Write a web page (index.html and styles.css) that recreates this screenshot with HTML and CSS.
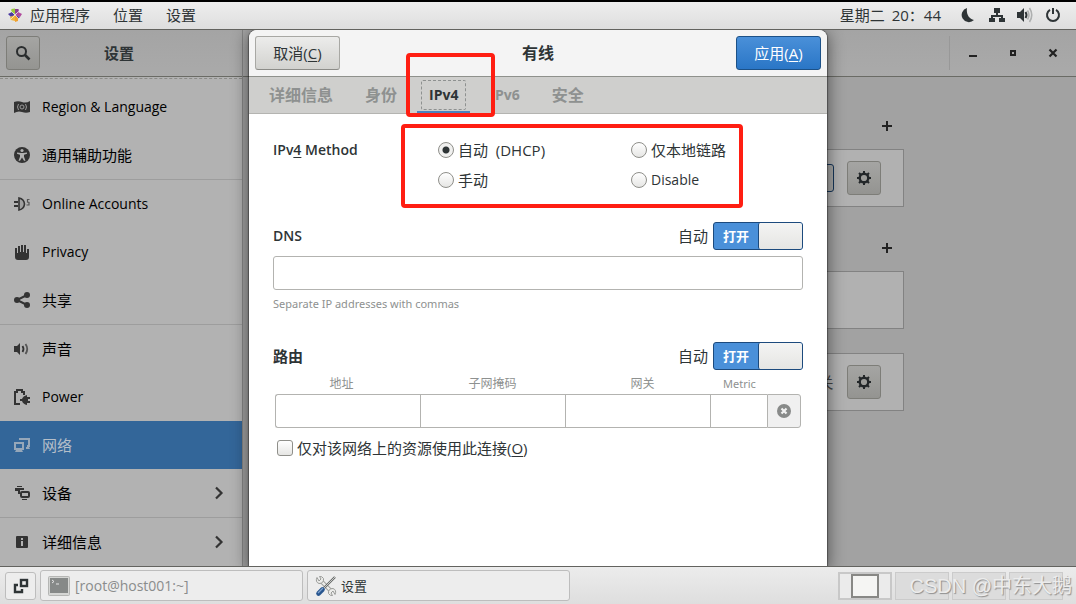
FILE: index.html
```html
<!DOCTYPE html>
<html lang="zh-CN">
<head>
<meta charset="utf-8">
<title>设置</title>
<link rel="stylesheet" href="styles.css">
</head>
<body>
<header class="topbar">
  <nav class="menus">
    <button class="menu"><svg class="distro" viewBox="0 0 14 14"><path fill="#9ccc3c" d="M3.500 1L7 .5V6L3 4z"/><path fill="#8d3f8f" d="M7 1l3.500 0L11 4 7 6z"/><path fill="#4a3aa0" d="M0 6l4-2 3 3-4 2z"/><path fill="#efb53a" d="M2 9l5-2v6l-4-1z"/><path fill="#b04a9c" d="M10 4l4 2-2 3-5-2z"/><path fill="#5a3a99" d="M7 7l5 2-2 2z"/><path fill="#f0a030" d="M7 7l3 3 0 3-3 1z"/><path stroke="#fff" d="M3 3l8 8M11 3L3 11" stroke-width=".6"/></svg>应用程序</button>
    <button class="menu">位置</button>
    <button class="menu">设置</button>
  </nav>
  <div class="status">
    <button class="clock">星期二<span>20：44</span></button>
    <svg class="icon" viewBox="0 0 16 16"><path fill="#2e3436" d="M6 1A7.200 7.200 0 1 0 13 13C8 12 5 7 6 1z"/></svg>
    <svg class="icon" viewBox="0 0 16 16"><path fill="#2e3436" d="M5 1h6v5H9v2h5v3h2v4h-6v-4h2v-1H4v1h2v4H0v-4h2V8h5V6H5z"/></svg>
    <svg class="icon" viewBox="0 0 16 16"><path fill="#2e3436" d="M0 5h3l4-4v14l-4-4H0z"/><path d="M8.500 5q2 3 0 6" fill="none" stroke="#2e3436" stroke-width="2"/><path d="M10.500 3.500q3 4.500 0 9M12.500 1q4.500 7 0 14" fill="none" stroke="#aeb0b0" stroke-width="1.600"/></svg>
    <svg class="icon" viewBox="0 0 16 16"><path fill="none" stroke="#2e3436" stroke-width="2" d="M5 2.800a6 6 0 1 0 6 0M8 1v6"/></svg>
  </div>
</header>

<main class="desktop">
  <section class="window">
    <aside class="sidebar">
      <header class="side-head">
        <button class="square" aria-label="搜索"><svg class="icon" viewBox="0 0 16 16"><circle cx="6.500" cy="6.500" r="4.500" fill="none" stroke="#2a2d2e" stroke-width="2"/><path d="M10 10l4.500 4.500" stroke="#2a2d2e" stroke-width="2.600"/></svg></button>
        <h1 class="side-title">设置</h1>
      </header>
      <nav class="side-list">
        <a class="item latin" href="#"><svg class="icon" viewBox="0 0 16 16"><path fill="#333" d="M0 3q4-1.500 8 0t8-1v11q-4 1.500-8 0t-8 1z"/><circle cx="8" cy="8" r="2" fill="none" stroke="#999"/><path d="M4.500 5q-2 3 0 6M11.500 5q2 3 0 6" fill="none" stroke="#999"/></svg>Region &amp; Language</a>
        <a class="item" href="#"><svg class="icon" viewBox="0 0 16 16"><circle cx="8" cy="8" r="8" fill="#333"/><circle cx="8" cy="3.500" r="1.600" fill="#b2b2b2"/><path fill="#b2b2b2" d="M3 5.500l4 .5h2l4-.5v1.300L10 7.800v2l1.500 4H10L8 10.500 6 13.800H4.500l1.500-4v-2L3 6.800z"/></svg>通用辅助功能</a>
        <a class="item latin ruled" href="#"><svg class="icon" viewBox="0 0 16 16"><path d="M0 6h4M0 10h4" stroke="#333" stroke-width="1.800"/><path d="M5 2q5 1 5.500 6Q10 13 5 14z" fill="#a0a0a0" stroke="#333" stroke-width="1.600"/><path d="M15.500 3.500h-2v2.500l1.500.5v2.500h-2.500" stroke="#555" fill="none" stroke-width="1.200"/></svg>Online Accounts</a>
        <a class="item latin" href="#"><svg class="icon" viewBox="0 0 16 16"><path fill="#333" d="M1 4h2v5h1V2h2v6h1V1h2v7h1V1h2v8h1V5h2v8q0 3-3 3H4q-3 0-3-3z"/></svg>Privacy</a>
        <a class="item" href="#"><svg class="icon" viewBox="0 0 16 16"><path d="M13 3L3 8l10 5" fill="none" stroke="#333" stroke-width="2"/><g fill="#333"><circle cx="13" cy="3" r="3"/><circle cx="3" cy="8" r="3"/><circle cx="13" cy="13" r="3"/></g></svg>共享</a>
        <a class="item ruled" href="#"><svg class="icon" viewBox="0 0 16 16"><path fill="#333" d="M0 5h3l3-3v12l-3-3H0z"/><path d="M8.500 5q2 3 0 6" fill="none" stroke="#333" stroke-width="1.800"/><path d="M11.500 3q3.500 5 0 10" fill="none" stroke="#555" stroke-width="1.800"/></svg>声音</a>
        <a class="item latin" href="#"><svg class="icon" viewBox="0 0 16 16"><path d="M6 15H1V3h2V1h5v2h2v3" fill="none" stroke="#333" stroke-width="2"/><path fill="#333" d="M6 10h2q1-3 5-4v2h3v2h-2v2h2v2h-3v2q-4-1-5-4H6z"/></svg>Power</a>
        <a class="item selected" href="#" aria-current="page"><svg class="icon" viewBox="0 0 16 16"><path d="M6 3V2h9v7h-2" fill="none" stroke="#96a7b9" stroke-width="2"/><rect x="1" y="6" width="8" height="6" fill="none" stroke="#96a7b9" stroke-width="2"/><path fill="#96a7b9" d="M2 13h6l1 2H1zM12 10h3l1 2h-4z"/></svg>网络</a>
        <a class="item" href="#"><svg class="icon" viewBox="0 0 16 16"><path fill="#333" d="M3 1h5v1H3zM1 3h9v2H6v4H4V6H1zM8 14h5v1H8z"/><rect x="7" y="7" width="8" height="5" rx="1" fill="none" stroke="#333" stroke-width="2"/></svg>设备<svg class="icon chevron" viewBox="0 0 16 16"><path d="M5 2.500L10.500 8 5 13.500" fill="none" stroke="#333" stroke-width="2.200"/></svg></a>
        <a class="item ruled" href="#"><svg class="icon" viewBox="0 0 16 16"><rect x="2" y="2" width="12" height="12" rx="1" fill="#333"/><path fill="#b2b2b2" d="M7 4h2v2H7zM7 7h2v5H7z"/></svg>详细信息<svg class="icon chevron" viewBox="0 0 16 16"><path d="M5 2.500L10.500 8 5 13.500" fill="none" stroke="#333" stroke-width="2.200"/></svg></a>
      </nav>
    </aside>

    <div class="content">
      <header class="content-head">
        <div class="window-buttons">
          <button class="plain" aria-label="最小化"><svg class="icon" viewBox="0 0 16 16"><path fill="#222" d="M4 10h8v2H4z"/></svg></button>
          <button class="plain" aria-label="最大化"><svg class="icon" viewBox="0 0 16 16"><rect x="6" y="6" width="4" height="4" fill="none" stroke="#222" stroke-width="2"/></svg></button>
          <button class="plain" aria-label="关闭"><svg class="icon" viewBox="0 0 16 16"><path d="M4.500 4.500l7 7M11.500 4.500l-7 7" stroke="#222" stroke-width="2.200"/></svg></button>
        </div>
      </header>
      <div class="panels">
        <div class="panel-head"><button class="plain" aria-label="添加"><svg class="icon" viewBox="0 0 16 16"><path fill="#222" d="M3 7h4V3h2v4h4v2H9v4H7V9H3z"/></svg></button></div>
        <div class="card"><span class="card-switch"></span><button class="square" aria-label="选项"><svg class="icon" viewBox="0 0 16 16"><circle cx="8" cy="8" r="4.300" fill="none" stroke="#232729" stroke-width="2.400"/><path d="M8 1v2M8 13v2M1 8h2M13 8h2M3 3l1.500 1.500M11.500 11.500L13 13M13 3l-1.500 1.500M4.500 11.500L3 13" stroke="#232729" stroke-width="2"/></svg></button></div>
        <div class="panel-head spaced"><button class="plain" aria-label="添加"><svg class="icon" viewBox="0 0 16 16"><path fill="#222" d="M3 7h4V3h2v4h4v2H9v4H7V9H3z"/></svg></button></div>
        <div class="card"></div>
        <div class="card detached"><span class="card-state">关</span><button class="square" aria-label="选项"><svg class="icon" viewBox="0 0 16 16"><circle cx="8" cy="8" r="4.300" fill="none" stroke="#232729" stroke-width="2.400"/><path d="M8 1v2M8 13v2M1 8h2M13 8h2M3 3l1.500 1.500M11.500 11.500L13 13M13 3l-1.500 1.500M4.500 11.500L3 13" stroke="#232729" stroke-width="2"/></svg></button></div>
      </div>
    </div>
  </section>

  <section class="dialog" role="dialog" aria-labelledby="dialog-title">
    <header class="dialog-head">
      <button class="button">取消(<u>C</u>)</button>
      <h2 class="dialog-title" id="dialog-title">有线</h2>
      <button class="button primary">应用(<u>A</u>)</button>
    </header>
    <div class="tabs" role="tablist">
      <button class="tab" role="tab">详细信息</button>
      <button class="tab" role="tab">身份</button>
      <button class="tab latin active" role="tab" aria-selected="true"><span class="focus">IPv4</span></button>
      <button class="tab latin" role="tab">IPv6</button>
      <button class="tab" role="tab">安全</button>
      <div class="mark mark-tab"></div>
    </div>
    <form class="form">
      <div class="methods" role="radiogroup" aria-labelledby="method">
        <strong class="label latin" id="method">IPv<u>4</u> Method</strong>
        <label class="choice"><input class="radio" type="radio" name="method" checked>自动&nbsp; (DHCP)</label>
        <label class="choice"><input class="radio" type="radio" name="method">仅本地链路</label>
        <label class="choice second"><input class="radio" type="radio" name="method">手动</label>
        <label class="choice latin"><input class="radio" type="radio" name="method">Disable</label>
        <div class="mark mark-methods"></div>
      </div>

      <div class="row">
        <label class="label latin" for="dns">DNS</label>
        <label class="auto">自动<input class="toggle" type="checkbox" role="switch" checked><span class="track"><span class="on">打开</span><span class="knob"></span></span></label>
      </div>
      <input class="entry" id="dns" type="text" aria-describedby="dns-hint">
      <p class="hint" id="dns-hint">Separate IP addresses with commas</p>

      <div class="row">
        <strong class="label">路由</strong>
        <label class="auto">自动<input class="toggle" type="checkbox" role="switch" checked><span class="track"><span class="on">打开</span><span class="knob"></span></span></label>
      </div>
      <table class="routes">
        <thead>
          <tr><th class="address" id="addr">地址</th><th id="mask">子网掩码</th><th class="gateway" id="gate">网关</th><th class="metric" id="metric">Metric</th><th class="remove"></th></tr>
        </thead>
        <tbody>
          <tr>
            <td><input class="cell" type="text" aria-labelledby="addr"></td>
            <td><input class="cell" type="text" aria-labelledby="mask"></td>
            <td><input class="cell" type="text" aria-labelledby="gate"></td>
            <td><input class="cell" type="text" aria-labelledby="metric"></td>
            <td><button class="cell delete" type="button" aria-label="删除"><svg class="icon" viewBox="0 0 16 16"><circle cx="8" cy="8" r="7" fill="#888a89"/><path d="M5.500 5.500l5 5M10.500 5.500l-5 5" stroke="#f2f2f2" stroke-width="2.200"/></svg></button></td>
          </tr>
        </tbody>
      </table>
      <label class="choice only"><input class="check" type="checkbox"><span>仅对该网络上的资源使用此连接(<u>O</u>)</span></label>
    </form>
  </section>
</main>

<footer class="taskbar">
  <button class="show-desktop" aria-label="显示桌面"><svg class="icon" viewBox="0 0 16 16"><rect x="8" y="2" width="6" height="6" fill="none" stroke="#2e3436" stroke-width="2.400"/><path d="M5 7H2v7h7v-3" fill="none" stroke="#2e3436" stroke-width="2.400"/></svg></button>
  <button class="task dim"><svg class="task-icon" viewBox="0 0 22 22"><rect x=".5" y="1.500" width="21" height="19" rx="1" fill="#d5d6d4" stroke="#b5b6b4"/><rect x="2" y="3" width="18" height="15" fill="#868988"/><path d="M4 5l2 1.500L4 8M8 9h3" fill="none" stroke="#e6e6e6"/></svg>[root@host001:~]</button>
  <button class="task cjk-small"><svg class="task-icon" viewBox="0 0 22 22"><path d="M5 5l12 12" stroke="#999b98" stroke-width="4"/><path d="M5 5l12 12" stroke="#ededeb" stroke-width="2.400"/><path d="M2 2.500Q0 7 4 8.500q5 0 4.500-5Q7 1 4.500 1.500L6 4 4 6zM20 19.500q2-4.500-2-6-5 0-4.500 5Q15 21 17.500 20.500L16 18l2-2z" fill="#ececea" stroke="#999b98"/><path d="M9 13L20 2" stroke="#666968" stroke-width="2.400"/><path d="M9 13L20 2" stroke="#c8c9c7" stroke-width="1"/><path d="M3.500 18.500l4-4" stroke="#28568f" stroke-width="4.600" stroke-linecap="round"/><path d="M3 18l5-5" stroke="#7fa3cf" stroke-width="1.200"/></svg>设置</button>
  <div class="workspaces">
    <button class="workspace current" aria-label="工作区 1"><span class="thumb"></span></button>
    <button class="workspace" aria-label="工作区 2"></button>
    <button class="workspace" aria-label="工作区 3"></button>
    <button class="workspace" aria-label="工作区 4"></button>
  </div>
  <span class="watermark">CSDN @中东大鹅</span>
</footer>
</body>
</html>
```
FILE: styles.css
```css
* {
  box-sizing: border-box;
}

body {
  margin: 0;
  min-height: 100vh;
  display: flex;
  flex-direction: column;
  font: 15px/18px "Open Sans", "Noto Sans CJK SC", sans-serif;
  color: #2e3436;
  border-top: 2px solid #000;
  overflow: hidden;
}

button,
input {
  font: inherit;
  color: inherit;
  margin: 0;
  padding: 0;
  border: 0;
  background: none;
}

h1,
h2,
p {
  margin: 0;
}

.latin,
.dim {
  font-size: 14px;
}

.icon {
  width: 16px;
  height: 16px;
  flex: none;
  display: block;
}

/* Top bar */
.topbar {
  height: 28px;
  display: flex;
  justify-content: space-between;
  padding: 0 15px 1px 8px;
  background: linear-gradient(#eeeeee, #dedede);
  border-bottom: 1px solid #63635f;
}

.menus,
.status {
  display: flex;
  align-items: center;
}

.menus {
  gap: 23px;
}

.menu {
  display: flex;
  align-items: center;
  gap: 8px;
}

.distro {
  width: 14px;
  height: 14px;
}

.status {
  gap: 12px;
}

.clock {
  display: flex;
  gap: 7px;
  margin-right: 8px;
}

/* Settings window */
.desktop {
  flex: 1;
  display: flex;
  position: relative;
  overflow: hidden;
}

.window {
  flex: 1;
  display: flex;
  background: #a2a2a2;
}

.sidebar {
  width: 243px;
  flex: none;
  display: flex;
  flex-direction: column;
  background: #b2b2b2;
  border-right: 1px solid #858585;
}

.side-head,
.content-head {
  height: 47px;
  display: flex;
  align-items: center;
  background: linear-gradient(#a4a4a4, #aaaaaa);
  border-bottom: 1px solid #6a6b65;
}

.side-head {
  padding: 0 44px 0 6px;
}

.side-title {
  flex: 1;
  text-align: center;
  font-size: 15px;
  line-height: 18px;
}

.square {
  width: 34px;
  height: 34px;
  display: grid;
  place-items: center;
  border: 1px solid #7d7d78;
  border-radius: 3px;
  background: linear-gradient(#a5a5a3, #949491);
}

.side-list {
  flex: 1;
  margin-top: 1px;
  padding-top: 4px;
  border-top: 1px dashed #8c8c89;
}

.item {
  height: 48px;
  display: flex;
  align-items: center;
  gap: 12px;
  padding: 0 15px 0 14px;
  color: #000;
  text-decoration: none;
}

.ruled {
  height: 49px;
  border-top: 1px solid #9d9d9d;
}

.selected {
  background: #336699;
  color: #b6bfc9;
}

.chevron {
  margin-left: auto;
}

.content {
  flex: 1;
}

.content-head {
  justify-content: flex-end;
  padding-right: 3px;
}

.window-buttons {
  display: flex;
  padding-left: 3px;
  border-left: 1px solid #989898;
}

.plain {
  width: 40px;
  height: 34px;
  display: grid;
  place-items: center;
}

.panels {
  width: 488px;
  margin: 26px auto 0;
}

.panel-head {
  height: 46px;
  display: flex;
  align-items: center;
  justify-content: flex-end;
}

.panel-head .plain {
  width: 34px;
}

.spaced {
  margin-top: 18px;
}

.card {
  height: 58px;
  display: flex;
  align-items: center;
  justify-content: flex-end;
  gap: 13px;
  padding-right: 22px;
  background: #b1b1b1;
  border: 1px solid #828282;
}

.detached {
  margin-top: 24px;
}

.card-switch {
  width: 90px;
  height: 28px;
  border: 1px solid #16365a;
  border-radius: 3px;
  background: #a7a7a5;
}

.card-state {
  color: #444;
}

/* Connection dialog, floating over the settings window */
.dialog {
  position: absolute;
  top: 0;
  bottom: 0;
  left: 0;
  right: 0;
  width: 578px;
  margin: 0 auto;
  background: #fff;
  border-radius: 8px 8px 0 0;
  box-shadow: 0 0 1px 1px rgba(0, 0, 0, 0.35), 0 3px 16px 2px rgba(0, 0, 0, 0.45);
}

.dialog-head {
  height: 47px;
  display: flex;
  align-items: center;
  justify-content: space-between;
  padding: 0 6px;
  background: #f4f4f4;
  border-bottom: 1px solid #8f918c;
  border-radius: 8px 8px 0 0;
}

.dialog-title {
  font-size: 16px;
  line-height: 18px;
}

.button {
  width: 85px;
  height: 34px;
  border: 1px solid #a8a8a4;
  border-bottom-color: #8c8c88;
  border-radius: 3px;
  background: linear-gradient(#ececeb, #d2d2cf);
}

.primary {
  color: #fff;
  border-color: #1c5187;
  background: linear-gradient(#4a90d9, #2a76c6);
}

u {
  text-underline-offset: 2px;
}

.tabs {
  height: 37px;
  display: flex;
  gap: 8px;
  padding: 0 8px;
  position: relative;
  background: #cfcfcd;
  border-bottom: 1px solid #b4b4b1;
}

.tab {
  padding: 0 12px;
  font-size: 16px;
  font-weight: bold;
  color: #8e9190;
}

.tab.latin {
  font-size: 14px;
}

.active {
  padding: 2px 4px 0;
  color: #2e3436;
  border-bottom: 2px solid #4a82bd;
}

.focus {
  display: block;
  padding: 5px 7px;
  border: 1px dashed #8e9190;
  border-radius: 2px;
}

/* Highlight frames drawn on top of the dialog */
.mark {
  position: absolute;
  border: 4px solid #ff1e12;
  border-radius: 4px;
  pointer-events: none;
}

.mark-tab {
  left: 157px;
  top: -24px;
  width: 89px;
  height: 64px;
}

.mark-methods {
  left: 128px;
  top: -17px;
  width: 342px;
  height: 84px;
}

.form {
  padding: 27px 24px 0;
}

.methods {
  display: grid;
  grid-template-columns: 165px 193px 1fr;
  grid-auto-rows: 18px;
  row-gap: 12px;
  margin-bottom: 33px;
  position: relative;
}

.second {
  grid-column: 2;
}

.label {
  font-weight: bold;
}

.label.latin {
  font-weight: 600;
}

.choice {
  display: flex;
  align-items: center;
  gap: 4px;
  white-space: nowrap;
}

.radio,
.check {
  appearance: none;
  width: 16px;
  height: 16px;
  flex: none;
  border: 1px solid #8f8f8a;
  background: linear-gradient(#ffffff, #e6e6e4);
}

.radio {
  border-radius: 50%;
}

.radio:checked {
  background: radial-gradient(circle, #2e3436 3px, #f0f0ef 4px);
}

.check {
  border-radius: 3px;
}

.row {
  height: 28px;
  display: flex;
  align-items: center;
  justify-content: space-between;
}

.auto {
  display: flex;
  align-items: center;
  gap: 5px;
}

.toggle {
  position: absolute;
  opacity: 0;
}

.track {
  width: 90px;
  height: 28px;
  display: grid;
  grid-template-columns: 1fr 1fr;
  border: 1px solid #1c4a7d;
  border-radius: 3px;
  background: #4a90d9;
}

.on {
  display: grid;
  place-items: center;
  font-size: 13px;
  font-weight: bold;
  color: #fff;
}

.knob {
  border-left: 1px solid #1c4a7d;
  border-radius: 2px;
  background: linear-gradient(#f4f4f3, #e5e5e3);
}

.entry {
  display: block;
  width: 100%;
  height: 34px;
  margin-top: 6px;
  padding: 0 8px;
  border: 1px solid #b3b3b0;
  border-radius: 3px;
}

.hint {
  margin: 5px 0 29px;
  font-family: "Noto Sans", sans-serif;
  font-size: 11px;
  color: #8e9190;
}

.routes {
  width: calc(100% - 4px);
  margin: 0 2px;
  table-layout: fixed;
  border-collapse: collapse;
}

.routes th {
  height: 24px;
  padding: 3px 0 0;
  font-size: 12px;
  font-weight: normal;
  color: #8e9190;
}

.routes .address {
  padding-right: 12px;
}

.routes .gateway {
  padding-left: 10px;
}

.routes .metric {
  width: 57px;
  padding-left: 2px;
  font-family: "Noto Sans", sans-serif;
  font-size: 11px;
}

.routes .remove {
  width: 34px;
}

.routes td {
  padding: 0;
}

.cell {
  display: block;
  width: 100%;
  height: 34px;
  border: 1px solid #b3b3b0;
  border-right-width: 0;
}

.routes td:first-child .cell {
  border-radius: 3px 0 0 3px;
}

.cell.delete {
  display: grid;
  place-items: center;
  background: #f0f0f0;
  border-right-width: 1px;
  border-radius: 0 3px 3px 0;
}

.only {
  margin: 10px 0 0 4px;
  height: 20px;
}

/* Task bar */
.taskbar {
  height: 38px;
  display: flex;
  align-items: center;
  gap: 4px;
  padding: 0 13px 0 5px;
  position: relative;
  background: linear-gradient(#ececec, #dedede);
  border-top: 1px solid #63635f;
}

.show-desktop {
  width: 31px;
  height: 28px;
  display: grid;
  place-items: center;
  border: 1px solid #bdbdbd;
  border-radius: 3px;
  background: #ededed;
}

.task {
  flex: 0 1 263px;
  height: 31px;
  display: flex;
  align-items: center;
  gap: 5px;
  padding-left: 7px;
  border: 1px solid #bdbdbd;
  border-radius: 3px;
  background: #ededed;
}

.dim {
  color: #8a8c8c;
}

.cjk-small {
  gap: 4px;
  font-size: 13px;
}

.task-icon {
  width: 22px;
  height: 22px;
}

.workspaces {
  display: flex;
  gap: 3px;
  margin-left: auto;
}

.workspace {
  width: 54px;
  height: 28px;
  border: 1px solid #cbcbcb;
  background: #dcdcdc;
}

.current {
  display: grid;
  place-items: center;
  border: 2px solid #c8c8c8;
  background: #ebebeb;
}

.thumb {
  width: 28px;
  height: 24px;
  border: 2px solid #888885;
  background: #f5f5f3;
}

.watermark {
  position: absolute;
  right: 4px;
  bottom: 6px;
  font-family: "Liberation Sans", "Noto Sans CJK SC", sans-serif;
  font-size: 20px;
  line-height: 24px;
  color: #ececec;
  text-shadow: 1px 1px 1px #8e8e8e;
}
```
